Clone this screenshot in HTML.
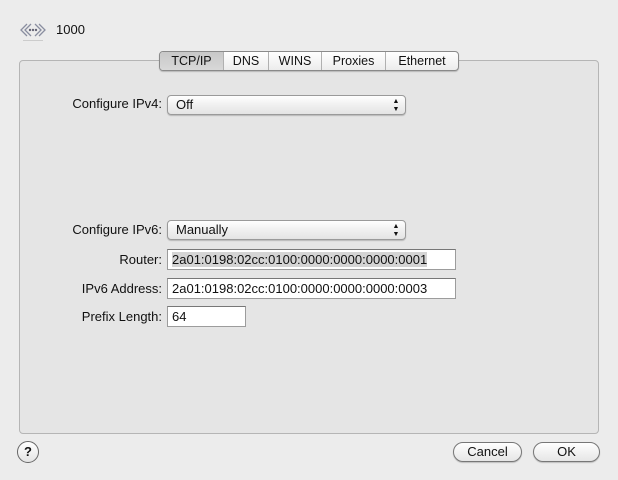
<!DOCTYPE html>
<html><head><style>
body{margin:0;width:618px;height:480px;background:#ececec;font-family:"Liberation Sans",sans-serif;font-size:13px;color:#111;position:relative;overflow:hidden}
.a{position:absolute}
.panel{left:19px;top:60px;width:578px;height:372px;border:1px solid #b5b5b5;border-radius:4px;background:#e5e5e5}
.tabs{left:159px;top:51px;height:18px;border:1px solid #8a8a8a;border-radius:4px;display:flex;background:linear-gradient(#fff,#ececec);box-shadow:0 1px 1px rgba(0,0,0,.2)}
.tabs div{line-height:18px;border-left:1px solid #b0b0b0;font-size:12.5px;text-align:center}
.tabs div:first-child{border-left:none;background:linear-gradient(#c8c8c8,#d8d8d8);border-radius:3px 0 0 3px}
.lbl{text-align:right;width:162px;left:0}
.pop{border:1px solid #9a9a9a;border-radius:4px;background:linear-gradient(#fff,#f0f0f0 50%,#e4e4e4);height:18px;line-height:18px;padding-left:8px;box-shadow:0 1px 1px rgba(0,0,0,.2)}
.pop span{position:absolute;right:0;top:0;width:18px;text-align:center;font-size:7px;line-height:8px;padding-top:2px}
.fld{border:1px solid #9c9c9c;border-top-color:#777;background:#fff;height:19px;line-height:19px;padding-left:4px;font-size:13px}
.btn{border:1px solid #777;border-radius:11px;background:linear-gradient(#fff,#f2f2f2 50%,#e6e6e6);height:18px;line-height:18px;text-align:center;box-shadow:0 1px 1px rgba(0,0,0,.2)}
</style></head><body>
<svg class="a" style="left:20px;top:21px" width="26" height="22" viewBox="0 0 26 22"><path d="M7 3L1 9L7 15M11 3L5 9L11 15M15 3L21 9L15 15M19 3L25 9L19 15" fill="none" stroke="#8a8ea0" stroke-width="1.3"/><circle cx="10" cy="9" r="1.2" fill="#667"/><circle cx="13" cy="9" r="1.2" fill="#667"/><circle cx="16" cy="9" r="1.2" fill="#667"/><rect x="3" y="19" width="20" height="1" fill="#ccc"/></svg>
<div class="a" style="left:56px;top:22px;font-size:13px">1000</div>
<div class="a panel"></div>
<div class="a tabs"><div style="width:63px">TCP/IP</div><div style="width:44px">DNS</div><div style="width:52px">WINS</div><div style="width:63px">Proxies</div><div style="width:72px">Ethernet</div></div>
<div class="a lbl" style="top:96px">Configure IPv4:</div>
<div class="a pop" style="left:167px;top:95px;width:229px">Off<span>▲<br>▼</span></div>
<div class="a lbl" style="top:222px">Configure IPv6:</div>
<div class="a pop" style="left:167px;top:220px;width:229px">Manually<span>▲<br>▼</span></div>
<div class="a lbl" style="top:252px">Router:</div>
<div class="a fld" style="left:167px;top:249px;width:283px;background:#fff"><span style="background:#d4d4d4">2a01:0198:02cc:0100:0000:0000:0000:0001</span></div>
<div class="a lbl" style="top:281px">IPv6 Address:</div>
<div class="a fld" style="left:167px;top:278px;width:283px">2a01:0198:02cc:0100:0000:0000:0000:0003</div>
<div class="a lbl" style="top:309px">Prefix Length:</div>
<div class="a fld" style="left:167px;top:306px;width:73px">64</div>
<div class="a" style="left:17px;top:441px;width:20px;height:20px;border:1px solid #666;border-radius:50%;background:linear-gradient(#fff,#e4e4e4);text-align:center;line-height:20px;font-weight:bold;font-size:13px">?</div>
<div class="a btn" style="left:453px;top:442px;width:67px">Cancel</div>
<div class="a btn" style="left:533px;top:442px;width:65px">OK</div>
</body></html>
